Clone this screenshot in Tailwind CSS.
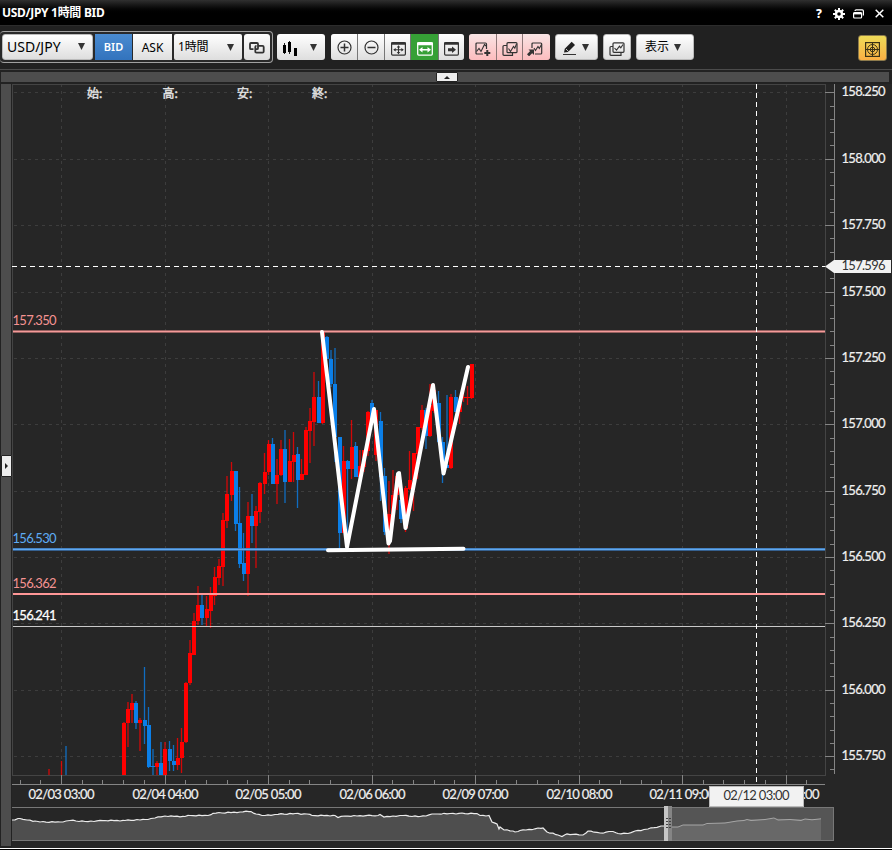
<!DOCTYPE html>
<html lang="ja">
<head>
<meta charset="utf-8">
<title>USD/JPY</title>
<script src="https://cdn.jsdelivr.net/npm/@tailwindcss/browser@4"></script>
</head>
<body class="w-[892px] h-[850px] overflow-hidden bg-[#222] font-[family-name:'Noto_Sans','Noto_Sans_CJK_JP',sans-serif] text-black">
<div class="flex flex-col w-full h-full">
  <header class="h-[26px] shrink-0 flex items-center justify-between pl-[2px] pr-[8px] bg-linear-to-b from-[#303030] via-black via-60% to-black border-b border-[#2c2c2c] text-white">
    <h1 class="text-[12px] font-bold tracking-[-0.3px] leading-none whitespace-nowrap">USD/JPY 1時間 BID</h1>
    <div class="flex items-center pt-[2px]">
      <span class="w-[8px] mr-[10px] font-extrabold text-[12px] leading-none text-center">?</span>
      <svg width="12" height="12" viewBox="0 0 12 12" class="mr-[8px]"><circle cx="6" cy="6" r="3" fill="none" stroke="#fff" stroke-width="2.4"/><path d="M6 0v2.5M6 9.5V12M0 6h2.500M9.500 6H12M1.800 1.800l1.700 1.700M8.500 8.500l1.700 1.700M10.200 1.800L8.500 3.500M3.500 8.500l-1.700 1.700" stroke="#fff" stroke-width="2"/></svg>
      <svg width="11" height="10" viewBox="0 0 11 10" class="mr-[11px]"><rect x=".6" y="3.600" width="8" height="5.400" rx="1" fill="none" stroke="#fff" stroke-width="1.200"/><path d="M.6 4.500h8" stroke="#fff" stroke-width="1.800"/><path d="M2 2Q2 .8 3.200 .8H9.200Q10.400 .8 10.400 2V6.500" fill="none" stroke="#fff" stroke-width="1.200"/></svg>
      <svg width="9" height="9" viewBox="0 0 9 9"><path d="M.7 .7l7.600 7.600M8.300 .7L.7 8.300" stroke="#fff" stroke-width="1.500"/></svg>
    </div>
  </header>

  <nav class="h-[44px] shrink-0 flex items-center pb-[2px] pr-[5px] border-b border-[#4b4b4b] bg-[#212121]">
    <div class="w-[273px] h-[32px] flex items-center gap-[2px] pl-[2px] border border-l-0 border-[#a0a0a0] rounded-[4px] bg-[#292929]">
      <button class="w-[91px] h-[26px] flex items-center justify-between pl-[4px] pr-[7px] rounded-[3px] border border-[#bbb] bg-linear-to-b from-white to-[#dedede] text-[14px] whitespace-nowrap"><span>USD/JPY</span><svg width="7" height="7"><path d="M0 0h7L3.500 7z" fill="#333"/></svg></button>
      <div class="flex h-[26px] w-[77px]">
        <button class="w-[37px] mr-px pt-[2px] bg-linear-to-b from-[#4a8bd0] to-[#3273bd] text-white text-[11px] font-semibold">BID</button>
        <button class="w-[39px] pt-[2px] bg-linear-to-b from-white to-[#dedede] text-[12px]">ASK</button>
      </div>
      <button class="w-[68px] h-[26px] flex items-center justify-between pl-[4px] pr-[8px] pt-px bg-linear-to-b from-white to-[#dedede] rounded-[2px] text-[12px] tracking-[-0.2px] whitespace-nowrap"><span>1時間</span><svg width="7" height="7"><path d="M0 0h7L3.500 7z" fill="#333"/></svg></button>
      <button class="w-[26px] h-[26px] flex items-center justify-center pt-[3px] bg-linear-to-b from-white to-[#dedede] rounded-[3px]"><svg width="16" height="12" viewBox="0 0 16 12" fill="none" stroke="#333" stroke-width="1.800"><path d="M4.500 7.200H2Q1 7.200 1 6.200V2Q1 1 2 1H8Q9 1 9 2V6.200Q9 7.200 8 7.200H7"/><path d="M9 3.800H13.500Q14.700 3.800 14.700 5V9.500Q14.700 10.700 13.500 10.700H7.500Q6.300 10.700 6.300 9.500V5Q6.300 3.800 7.500 3.800"/></svg></button>
    </div>

    <button class="ml-[4px] w-[48px] h-[26px] flex items-center justify-between pl-[5px] pr-[8px] pt-px rounded-[3px] bg-linear-to-b from-white to-[#dedede]"><svg width="16" height="15" viewBox="0 0 16 15" class="mt-[2px]"><path d="M2.500 2v11M7.500 0v13M13.500 7v8" stroke="#222" stroke-width="1"/><path d="M2.500 4v8M7.500 1v10M13.500 7v8" stroke="#000" stroke-width="3"/></svg><svg width="7" height="7"><path d="M0 0h7L3.500 7z" fill="#333"/></svg></button>

    <div class="ml-[6px] h-[26px] w-[133px] grid grid-cols-[26px_26px_25px_27px_25px] gap-px rounded-[3px] overflow-hidden bg-[#777]">
      <button class="flex items-center justify-center pt-[2px] bg-linear-to-b from-white to-[#dedede]"><svg width="15" height="15" viewBox="0 0 15 15" fill="none" stroke="#333"><circle cx="7.500" cy="7.500" r="6.500" stroke-width="1.200"/><path d="M3.500 7.500h8M7.500 3.500v8" stroke-width="1.500"/></svg></button>
      <button class="flex items-center justify-center pt-[2px] bg-linear-to-b from-white to-[#dedede]"><svg width="15" height="15" viewBox="0 0 15 15" fill="none" stroke="#333"><circle cx="7.500" cy="7.500" r="6.500" stroke-width="1.200"/><path d="M3.500 7.500h8" stroke-width="1.500"/></svg></button>
      <button class="flex items-center justify-center pl-px pt-[4px] bg-linear-to-b from-white to-[#dedede]"><svg width="15" height="14" viewBox="0 0 15 14" fill="none" stroke="#333"><rect x=".6" y=".6" width="13.800" height="12.500" rx="1" stroke-width="1.200"/><path d="M0 1.600h15" stroke-width="2.400"/><path d="M3 7.800h9M7.500 4v7.500" stroke-width="1.100"/><path d="M4.700 6v3.600L2.200 7.800zM10.300 6v3.600l2.500-1.800zM5.700 5.500h3.600L7.500 3.300zM5.700 10.100h3.600l-1.800 2.200z" fill="#333" stroke="none"/></svg></button>
      <button class="flex items-center justify-center pt-[4px] bg-[#36a036]"><svg width="16" height="14" viewBox="0 0 16 14" fill="none" stroke="#fff"><rect x=".7" y=".7" width="14.600" height="12.400" rx="1" stroke-width="1.300"/><path d="M0 1.900h16" stroke-width="2.800"/><path d="M4 7.800h8" stroke-width="1.600"/><path d="M5.500 5v5.600L2 7.800zM10.500 5v5.600L14 7.800z" fill="#fff" stroke="none"/></svg></button>
      <button class="flex items-center justify-center pt-[4px] bg-linear-to-b from-white to-[#dedede]"><svg width="15" height="14" viewBox="0 0 15 14" fill="none" stroke="#333"><rect x=".6" y=".6" width="13.800" height="12.500" rx="1" stroke-width="1.200"/><path d="M0 1.600h15" stroke-width="2.400"/><path d="M4 7.800h4" stroke-width="3"/><path d="M8 4.500v6.600l4-3.300z" fill="#333" stroke="none"/></svg></button>
    </div>

    <div class="ml-[5px] h-[26px] w-[81px] grid grid-cols-[27px_25px_27px] gap-px rounded-[3px] overflow-hidden bg-[#8d7777]">
      <button class="flex items-center justify-center pt-[4px] bg-linear-to-b from-[#f8e4e4] to-[#fcbcbe]"><svg width="16" height="14" viewBox="0 0 16 14" fill="none" stroke="#333"><path d="M8 12H2Q1 12 1 11V2Q1 1 2 1H10.500Q11.500 1 11.500 2V7" stroke-width="1.200"/><path d="M1.500 9.500L4 6.500 6 9.500 9.500 2.500 11 4" stroke-width="1.100"/><path d="M12.300 8v6M9.300 11h6" stroke-width="2"/></svg></button>
      <button class="flex items-center justify-center pt-[4px] bg-linear-to-b from-[#f8e4e4] to-[#fcbcbe]"><svg width="16" height="14" viewBox="0 0 16 14" fill="none" stroke="#333"><path d="M10.500 11v2.300H2Q1 13.300 1 12.300V4.500Q1 3.500 2 3.500H5" stroke-width="1.200"/><rect x="5" y=".7" width="10" height="10" rx="1" stroke-width="1.200"/><path d="M6.500 6.500l2 3 3-5 1.300 1.600L14.500 2" stroke-width="1.100"/></svg></button>
      <button class="flex items-center justify-center pt-[4px] pr-[3px] bg-linear-to-b from-[#f8e4e4] to-[#fcbcbe]"><svg width="16" height="14" viewBox="0 0 16 14" fill="none" stroke="#333"><path d="M5 6V2Q5 1 6 1H13.700Q14.700 1 14.700 2V11Q14.700 12 13.700 12H8" stroke-width="1.200"/><path d="M7 6l1.500 2.500 2.500-4 1.300 2L14.500 2.500" stroke-width="1.100"/><path d="M1 13.300l4-4" stroke-width="3"/><path d="M1.500 7.500h5.500v5.500z" fill="#333" stroke="none"/></svg></button>
    </div>

    <button class="ml-[5px] w-[43px] h-[26px] flex items-center justify-between pl-[7px] pr-[8px] pt-px rounded-[3px] border border-[#bbb] bg-linear-to-b from-white to-[#dedede]"><svg width="14" height="14" viewBox="0 0 14 14" class="mt-[2px]"><path d="M0 13.500h13" stroke="#333"/><path d="M1 11.500l.8-3.800L8.700 .8 12 4.100 5 11z" fill="#222"/><path d="M3 8l2.500 2.500" stroke="#eee" stroke-width=".8"/></svg><svg width="7" height="7"><path d="M0 0h7L3.500 7z" fill="#333"/></svg></button>
    <button class="ml-[5px] w-[28px] h-[26px] flex items-center justify-center pr-px pt-[4px] rounded-[3px] border border-[#bbb] bg-linear-to-b from-white to-[#dedede]"><svg width="16" height="14" viewBox="0 0 16 14" fill="none" stroke="#333"><path d="M12 10.500v2.800H2Q1 13.300 1 12.300V5.500Q1 4.500 2 4.500H4" stroke-width="1.200"/><rect x="4" y=".8" width="11" height="9.500" rx="1" stroke-width="1.200"/><path d="M5.500 6l2 2.200 3-4 1.300 1.600L14 2.500" stroke-width="1.100"/></svg></button>
    <button class="ml-[5px] w-[58px] h-[26px] flex items-center justify-center pr-[4px] pt-px gap-[5px] rounded-[3px] border border-[#bbb] bg-linear-to-b from-white to-[#dedede] text-[12px] whitespace-nowrap"><span>表示</span><svg width="7" height="7"><path d="M0 0h7L3.500 7z" fill="#333"/></svg></button>
    <button class="ml-auto mt-[3px] w-[29px] h-[26px] flex items-center justify-center pt-[2px] rounded-[3px] border border-[#8c7a4c] bg-linear-to-b from-[#eedb58] to-[#fbaf43]"><svg width="15" height="15" viewBox="0 0 15 15" fill="none" stroke="#3b3216"><rect x=".6" y=".6" width="13.800" height="13.800" stroke-width="1.200"/><circle cx="7.500" cy="7.500" r="5"/><circle cx="7.500" cy="7.500" r="2.300"/><path d="M7.500 0v15M0 7.500h15"/></svg></button>
  </nav>

  <div class="h-[14px] shrink-0 pt-[2px] pb-[2px] pl-px pr-[3px] bg-[#222]">
    <div class="h-[10px] bg-[#4d4d4d] flex justify-center items-center"><div class="w-[22px] h-[10px] shrink-0 bg-[#eee] border border-[#222] rounded-[1px] flex items-center justify-center ml-[3px]"><svg width="6" height="3"><path d="M3 0l3 3H0z" fill="#222"/></svg></div></div>
  </div>

  <main class="flex h-[764px] shrink-0">
    <aside class="w-[12px] shrink-0 pl-px pr-px pb-[2px]">
      <div class="h-full bg-[#4d4d4d] flex items-start"><div class="mt-[371px] w-[11px] h-[22px] shrink-0 bg-[#eee] border border-[#222] rounded-[1px] flex items-center justify-center"><svg width="3" height="6"><path d="M0 0l3 3-3 3z" fill="#222"/></svg></div></div>
    </aside>
    <svg id="chart" width="880" height="764" viewBox="12 84 880 764" font-family="Lato, sans-serif" class="block shrink-0">
      <rect x="12" y="84" width="880" height="764" fill="#262626"/>
      <g id="grid" stroke="#3d3d3d" stroke-dasharray="3 4" fill="none"></g>
      <g id="frame" shape-rendering="crispEdges" stroke="#444"><path d="M12.500 84V775M12 84.500H825M825.500 84V775M12 775.500H826" fill="none"/><path d="M834.500 84V774M12 784.500H825" stroke="#858585"/></g>
      <g id="ticks" stroke="#858585" shape-rendering="crispEdges"></g>
      <g id="candles"></g>
      <g id="levels">
        <path d="M13 331.500H825" stroke="#bd7473" stroke-width="2.600"/><path d="M13 331.500H825" stroke="#f49a99"/>
        <path d="M13 549.300H825" stroke="#3d76b4" stroke-width="2.800"/><path d="M13 549.300H825" stroke="#69b4fa"/>
        <path d="M13 594H825" stroke="#ff9797" stroke-width="2"/>
        <path d="M13 626.500H825" stroke="#c9c9c9" stroke-width="1.200"/>
        <g font-size="13"><text x="12.500" y="325" textLength="44" fill="#f59392">157.350</text><text x="12.500" y="543" textLength="44" fill="#5eacf4">156.530</text><text x="12.500" y="588" textLength="44" fill="#f59392">156.362</text><text x="12.500" y="620" textLength="44" fill="#fff" stroke="#fff" stroke-width=".25">156.241</text></g>
      </g>
      <g fill="none" stroke="#fff" stroke-width="4" stroke-linecap="round" stroke-linejoin="round"><path d="M322 332L347 547L374 409L388.500 543.500L390 541L398 474L399 473L405.500 528L433 385L443.500 473.500L468 367"/><path d="M328 550.200L463.500 548.700"/></g>
      <g stroke="#fff" stroke-width="1" stroke-dasharray="5 4"><path d="M12 266.500H825M756.500 84V787"/></g>
      <g font-family="'Noto Sans CJK JP', sans-serif" fill="#e4e4e4" stroke="#e4e4e4" stroke-width=".4" font-size="12"><text x="87" y="98">始:</text><text x="162.500" y="98">高:</text><text x="237" y="98">安:</text><text x="312" y="98">終:</text></g>
      <g id="labels" fill="#f0f0f0" stroke="#f0f0f0" stroke-width=".2" font-size="13"></g>
      <path d="M825 266.500L834 260H891V273H834z" fill="#f2f2f2"/><text x="841.500" y="270" textLength="44" font-size="13" fill="#333">157.596</text>
      <g id="navigator">
        <path id="navFill" fill="#4e4e4e"/>
        <path id="navLine" fill="none" stroke="#ececec" stroke-width="1.200"/>
        <rect x="668" y="807" width="166" height="34" fill="#555"/>
        <path d="M668 841V827L678 827 684 825H700L710 824 730 822 742 820 750 819 766 819.500 775 818.500 785 819H804L821 819V841z" fill="#686868"/>
        <path d="M672 827h6l5-2 20 0 4-1.500 18-.5 12-2 7-.5 3-1 4 1 14-1 9-1.500 4 2 12-.5 11 1 4-1.500 7 .8 9-1" fill="none" stroke="#a6a6a6"/>
        <path d="M12 807.500H834M12 840.500H834M833.500 807V841" stroke="#777" fill="none"/>
        <rect x="664" y="806" width="4" height="35" fill="#c6c6c6"/><rect x="668" y="806" width="4" height="35" fill="#858585"/><path d="M666 818.500h5M666 821.500h5M666 824.500h5M666 827.500h5" stroke="#444" stroke-dasharray="2 1"/>
      </g>
      <rect x="709.500" y="786.500" width="94" height="20" fill="#f2f2f2" stroke="#bbb"/><text x="723.500" y="800" textLength="66" font-size="13" fill="#333">02/12 03:00</text>
    </svg>
  </main>
  <footer class="h-[2px] shrink-0 bg-black border-t border-white"></footer>
</div>
<script>
// Candle rows: x, high, low, body top, body bottom, direction (1 = up / red)
const candles = [
[49,769,775,0,0,1],[61.5,761,775,0,0,1],[66,746,775,0,0,0],
[124,722,775,723,775,1],[128,702,747,709,723,1],[132,694,723,703,710,1],[136,701,729,703,723,0],[140,718,751,720,723,1],[144.5,667,744,720,726,0],[148.5,707,768,725,767,0],[153,749,775,766,767,0],[157,761,775,763,767,1],[161,742,775,763,775,0],[165,742,775,749,775,1],[169.5,741,771,749,761,0],[173.5,745,771,761,765,0],[177.5,738,770,758,765,1],[181.5,728,773,742,758,1],[186,682,743,683,742,1],[190,640,685,653,683,1],
[194,613,655,621,655,1],[198,586,625,605,621,1],[202,594,625,605,618,0],[206.5,596,627,609,618,1],[210.5,587,628,595,611,1],[214.5,567,605,577,596,1],[219,559,585,566,578,1],[223,513,586,520,567,1],[227,476,528,494,521,1],[231.5,462,501,471,495,1],[235.5,471,531,471,524,0],[239.5,487,568,523,564,0],[243.5,533,581,563,574,0],[248,502,596,516,574,1],[252,494,543,516,526,0],[256,506,568,511,526,1],[260,482,523,483,512,1],[264.5,453,494,472,484,1],[268.5,440,475,444,472,1],[272.5,438,484,444,484,0],[277,459,504,475,484,1],[281,440,476,449,475,1],[285,430,503,449,482,0],[289.5,439,482,461,482,1],[293.5,432,482,455,462,1],[297.5,447,508,454,480,0],
[301.5,459,480,474,480,1],[306,427,475,430,475,1],[310,408,463,421,431,1],[314,372,446,397,422,1],[318.5,381,423,397,423,0],[322.5,332,424,332,423,1],[327,336,359,337,359,0],[331,350,387,359,384,0],[335,348,462,384,437,0],[339.5,437,548,437,533,0],[343.5,446,533,461,533,1],[347.5,460,548,461,469,0],[351.5,420,479,447,469,1],[355.5,442,477,446,477,0],[360,450,477,466,477,1],[364,450,472,450,467,1],[368,411,456,412,451,1],[372,400,421,403,420,0],[376,410,461,410,455,1],[380.5,412,501,421,477,0],[384.5,468,535,476,532,0],
[389,481,554,514,541,1],[393,470,519,495,514,1],[397,474,510,476,495,1],[401,480,523,500,519,0],[405.5,486,532,488,528,1],[409.5,451,490,480,489,1],[413.5,453,511,453,480,1],[417.5,427,479,427,454,1],[422,405,430,410,428,1],[426,408,449,410,436,0],[430,384,437,405,436,1],[434,384,413,390,411,1],[438.5,391,443,403,442,0],[442.5,437,483,442,470,0],[447,395,468,465,468,0],[451,394,469,397,468,1],[455.5,390,412,397,412,0],[459.5,398,424,403,412,1],[463.5,387,402,397,398,1],[467.5,386,405,397,398,1],[471.5,364,399,364,398,1]];
const put = (id, s) => document.getElementById(id).innerHTML += s;
let s = '';
for (const [x,h,l,t,b,up] of candles) {
  const c = up ? '#f00' : '#0b7fe8';
  s += `<path d="M${x} ${h}V${l}" stroke="${c}" stroke-opacity=".8" stroke-width="1.3"/>`;
  if (b) s += `<rect x="${Math.round(x-2)}" y="${t}" width="4" height="${b-t}" fill="${c}"/>`;
}
put('candles', s);
let grid = '', ticks = '', labels = '';
for (let i = 0; i <= 10; i++) {
  const y = Math.round(92.4 + i*66.37) + .5;
  grid += `<path d="M14 ${y}H825"/>`;
  ticks += `<path d="M825 ${y}H834"/>`;
  labels += `<text x="841.5" y="${y+3.5}" textLength="44">${(158.25-i*.25).toFixed(3)}</text>`;
}
for (let i = 0; i <= 51; i++) if (i % 5) ticks += `<path d="M829.500 ${Math.round(92.4+i*13.274)+.5}H834"/>`;
const dates = ['02/03 03:00','02/04 04:00','02/05 05:00','02/06 06:00','02/09 07:00','02/10 08:00','02/11 09:00','02/12 10:00'];
dates.forEach((d,i) => {
  const x = Math.round(61 + i*103.5) + .5;
  grid += `<path d="M${x} 84V775"/>`;
  ticks += `<path d="M${x} 775V784"/>`;
  labels += `<text x="${x-33}" y="799" textLength="66">${d}</text>`;
});
for (let i = -2; i <= 36; i++) if (i % 5) ticks += `<path d="M${Math.round(61+i*20.7)+.5} 780V784"/>`;
put('grid', grid); put('ticks', ticks); put('labels', labels);

// Overview line: anchor points with small steps between them
const nav = [[12,820],[20,818.5],[27,820],[35,821],[40,822],[60,822],[70,820.5],[85,821.5],[105,820.5],[125,820.5],[145,819.5],[155,818],[165,816],[185,816.5],[190,815.5],[208,815.5],[213,813.3],[240,812],[251,811.5],[256,814],[262,815.5],[275,814.5],[295,813.5],[307,814],[312,815.5],[335,815.5],[338,817.5],[345,816],[378,815.5],[380,814.5],[384,817],[400,815.5],[420,816.5],[435,814],[450,813.5],[477,813.5],[480,815.5],[489,815.5],[492,822],[497,824],[499,829],[500,827],[504,830],[513,831],[515,832],[520,830.5],[543,828],[547,832],[558,835],[562,836.5],[567,834],[583,835],[588,831],[600,833],[613,831.5],[618,833.5],[628,833.5],[635,831],[648,829],[661,826],[668,827]];
const wob = [.4,-.4,.2,-.2,.5,-.1,-.5,.1];
let line = `M12 820`, k = 0;
for (let i = 1; i < nav.length; i++) {
  const [x0,y0] = nav[i-1], [x1,y1] = nav[i];
  for (let x = x0 + 3; x < x1 - 1; x += 3) line += `L${x} ${(y0+(y1-y0)*(x-x0)/(x1-x0)+wob[k++%8]).toFixed(1)}`;
  line += `L${x1} ${y1}`;
}
document.getElementById('navLine').setAttribute('d', line);
document.getElementById('navFill').setAttribute('d', line + 'V841H12z');
</script>
</body>
</html>
